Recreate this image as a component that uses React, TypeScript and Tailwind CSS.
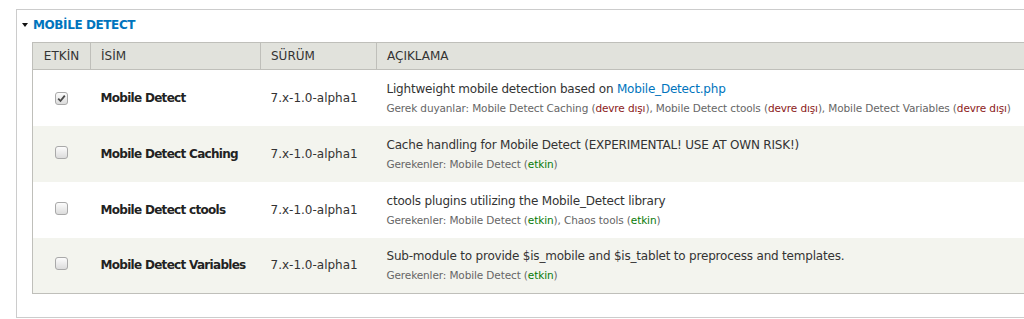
import React from 'react';

type Dep = { name: string; state: 'on' | 'off' };

interface Row {
  enabled: boolean;
  name: string;
  version: string;
  desc: React.ReactNode;
  label: string;
  deps: Dep[];
}

const rows: Row[] = [
  {
    enabled: true,
    name: 'Mobile Detect',
    version: '7.x-1.0-alpha1',
    desc: (
      <>
        Lightweight mobile detection based on <a className="text-[#0074bd]">Mobile_Detect.php</a>
      </>
    ),
    label: 'Gerek duyanlar',
    deps: [
      { name: 'Mobile Detect Caching', state: 'off' },
      { name: 'Mobile Detect ctools', state: 'off' },
      { name: 'Mobile Detect Variables', state: 'off' },
    ],
  },
  {
    enabled: false,
    name: 'Mobile Detect Caching',
    version: '7.x-1.0-alpha1',
    desc: 'Cache handling for Mobile Detect (EXPERIMENTAL! USE AT OWN RISK!)',
    label: 'Gerekenler',
    deps: [{ name: 'Mobile Detect', state: 'on' }],
  },
  {
    enabled: false,
    name: 'Mobile Detect ctools',
    version: '7.x-1.0-alpha1',
    desc: 'ctools plugins utilizing the Mobile_Detect library',
    label: 'Gerekenler',
    deps: [
      { name: 'Mobile Detect', state: 'on' },
      { name: 'Chaos tools', state: 'on' },
    ],
  },
  {
    enabled: false,
    name: 'Mobile Detect Variables',
    version: '7.x-1.0-alpha1',
    desc: 'Sub-module to provide $is_mobile and $is_tablet to preprocess and templates.',
    label: 'Gerekenler',
    deps: [{ name: 'Mobile Detect', state: 'on' }],
  },
];

const Checkbox: React.FC<{ checked: boolean }> = ({ checked }) => (
  <span className="inline-flex h-[13px] w-[13px] items-center justify-center rounded-[3px] border border-[#a9a9a9] bg-gradient-to-b from-[#fcfcfc] to-[#dcdcdc]">
    {checked && (
      <svg width="9" height="9" viewBox="0 0 9 9">
        <path d="M1.2 4.6 L3.5 7 L7.8 1.6" fill="none" stroke="#4a4a4a" strokeWidth="1.8" />
      </svg>
    )}
  </span>
);

export default function App() {
  return (
    <div
      className="h-[319px] w-[1024px] overflow-hidden bg-white text-[#333]"
      style={{ fontFamily: '"DejaVu Sans", Verdana, sans-serif' }}
    >
      <div className="ml-[16px] mt-[9px] h-[309px] w-[1100px] border border-[#ccc] pt-[2px]">
        <div className="flex h-[25px] items-center gap-[5px] pl-[5px]">
          <svg width="6" height="4" viewBox="0 0 6 4">
            <path d="M0 0 H6 L3 4 Z" fill="#111" />
          </svg>
          <span className="text-[12px] font-bold tracking-[-0.4px] text-[#0074bd]">MOBİLE DETECT</span>
        </div>
        <div className="pl-[15px] pt-[5px]">
          <table className="w-[1100px] border-collapse border border-[#bfbfba] text-left">
            <thead>
              <tr className="h-[27px] bg-[#e1e2dc] text-[12px] font-normal">
                <th className="w-[58px] border-r border-b border-[#bfbfba] text-center font-normal">ETKİN</th>
                <th className="w-[170px] border-r border-b border-[#bfbfba] pl-[10px] font-normal">İSİM</th>
                <th className="w-[116px] border-r border-b border-[#bfbfba] pl-[10px] font-normal">SÜRÜM</th>
                <th className="border-b border-[#bfbfba] pl-[10px] font-normal">AÇIKLAMA</th>
              </tr>
            </thead>
            <tbody>
              {rows.map((r, i) => (
                <tr key={r.name} className={i % 2 === 1 ? 'h-[56px] bg-[#f3f4ee]' : 'h-[56px] bg-white'}>
                  <td className="text-center align-middle">
                    <Checkbox checked={r.enabled} />
                  </td>
                  <td className="whitespace-nowrap pl-[10px] text-[12px] font-bold tracking-[-0.7px] text-[#222]">
                    {r.name}
                  </td>
                  <td className="pl-[10px] text-[12px]">{r.version}</td>
                  <td className="pl-[10px]">
                    <div className="text-[12px] leading-[18px] tracking-[-0.2px]">{r.desc}</div>
                    <div className="mt-[2px] whitespace-nowrap text-[10.5px] leading-[16px] tracking-[-0.12px] text-[#666]">
                      {r.label}:{' '}
                      {r.deps.map((d, j) => (
                        <React.Fragment key={d.name}>
                          {d.name} (
                          <span className={d.state === 'on' ? 'text-[#077a07]' : 'text-[#8c1a1a]'}>
                            {d.state === 'on' ? 'etkin' : 'devre dışı'}
                          </span>
                          ){j < r.deps.length - 1 ? ', ' : ''}
                        </React.Fragment>
                      ))}
                    </div>
                  </td>
                </tr>
              ))}
            </tbody>
          </table>
        </div>
      </div>
    </div>
  );
}
